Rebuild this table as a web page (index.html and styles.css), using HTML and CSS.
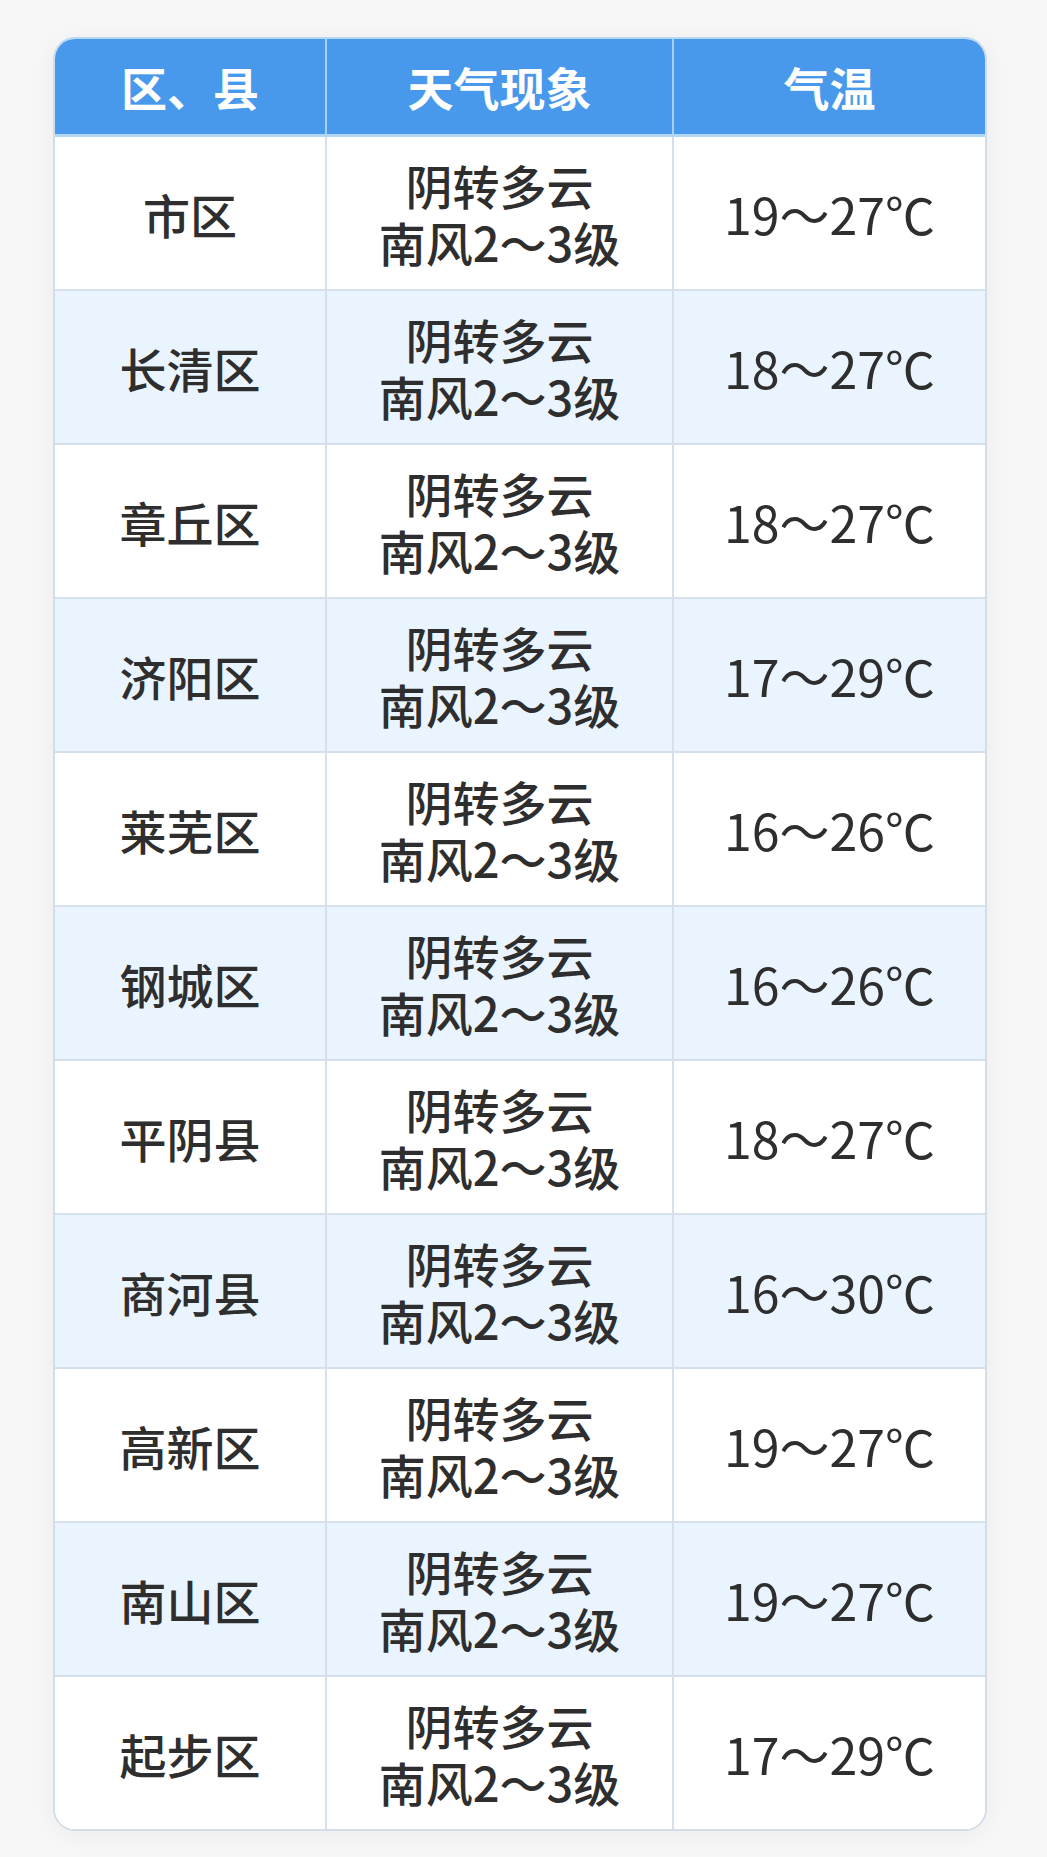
FILE: index.html
```html
<!DOCTYPE html>
<html lang="zh-CN">
<head>
<meta charset="utf-8">
<link rel="stylesheet" href="styles.css">
</head>
<body>
<div class="page">
  <div class="card">
    <div class="row head">
      <div class="cell">区、县</div>
      <div class="cell">天气现象</div>
      <div class="cell">气温</div>
    </div>
    <div class="row">
      <div class="cell">市区</div>
      <div class="cell wx"><span class="ln">阴转多云</span><span class="ln">南风2～3级</span></div>
      <div class="cell temp">19～27℃</div>
    </div>
    <div class="row alt">
      <div class="cell">长清区</div>
      <div class="cell wx"><span class="ln">阴转多云</span><span class="ln">南风2～3级</span></div>
      <div class="cell temp">18～27℃</div>
    </div>
    <div class="row">
      <div class="cell">章丘区</div>
      <div class="cell wx"><span class="ln">阴转多云</span><span class="ln">南风2～3级</span></div>
      <div class="cell temp">18～27℃</div>
    </div>
    <div class="row alt">
      <div class="cell">济阳区</div>
      <div class="cell wx"><span class="ln">阴转多云</span><span class="ln">南风2～3级</span></div>
      <div class="cell temp">17～29℃</div>
    </div>
    <div class="row">
      <div class="cell">莱芜区</div>
      <div class="cell wx"><span class="ln">阴转多云</span><span class="ln">南风2～3级</span></div>
      <div class="cell temp">16～26℃</div>
    </div>
    <div class="row alt">
      <div class="cell">钢城区</div>
      <div class="cell wx"><span class="ln">阴转多云</span><span class="ln">南风2～3级</span></div>
      <div class="cell temp">16～26℃</div>
    </div>
    <div class="row">
      <div class="cell">平阴县</div>
      <div class="cell wx"><span class="ln">阴转多云</span><span class="ln">南风2～3级</span></div>
      <div class="cell temp">18～27℃</div>
    </div>
    <div class="row alt">
      <div class="cell">商河县</div>
      <div class="cell wx"><span class="ln">阴转多云</span><span class="ln">南风2～3级</span></div>
      <div class="cell temp">16～30℃</div>
    </div>
    <div class="row">
      <div class="cell">高新区</div>
      <div class="cell wx"><span class="ln">阴转多云</span><span class="ln">南风2～3级</span></div>
      <div class="cell temp">19～27℃</div>
    </div>
    <div class="row alt">
      <div class="cell">南山区</div>
      <div class="cell wx"><span class="ln">阴转多云</span><span class="ln">南风2～3级</span></div>
      <div class="cell temp">19～27℃</div>
    </div>
    <div class="row last">
      <div class="cell">起步区</div>
      <div class="cell wx"><span class="ln">阴转多云</span><span class="ln">南风2～3级</span></div>
      <div class="cell temp">17～29℃</div>
    </div>
  </div>
</div>
</body>
</html>
```

FILE: styles.css
```css
html, body {
  margin: 0;
  padding: 0;
  background: #f7f7f7;
}

.page {
  padding: 37px 0 30px 53px;
  font-family: "Noto Sans CJK SC", "Noto Sans", sans-serif;
}

.card {
  width: 934px;
  box-sizing: border-box;
  border: 2px solid #d3dde7;
  border-top-color: #b4d8f7;
  border-radius: 22px;
  overflow: hidden;
  background: #ffffff;
  box-shadow: 0 4px 30px rgba(0, 0, 0, 0.05);
}

.row {
  display: grid;
  grid-template-columns: 272px 347px 1fr;
  height: 154px;
  border-bottom: 2px solid #d6e0ea;
  box-sizing: border-box;
  background: #ffffff;
  color: #2e2e2e;
  font-size: 47px;
  font-weight: 500;
  line-height: 57px;
}

.row.alt {
  background: #eaf4fe;
}

.row.last {
  border-bottom: none;
  height: 152px;
}

.row.head {
  height: 98px;
  background: #4899eb;
  color: #ffffff;
  font-size: 46px;
  font-weight: 700;
  border-bottom: 3px solid #b3d7f6;
}

.cell {
  display: flex;
  align-items: center;
  justify-content: center;
  text-align: center;
  border-right: 2px solid #d6e0ea;
}

.cell:last-child {
  border-right: none;
}

.cell.wx {
  flex-direction: column;
}

.ln {
  display: block;
  height: 57px;
  white-space: nowrap;
}

.cell.temp {
  font-size: 50px;
  font-weight: 400;
}

.head .cell {
  border-right-color: #a9d0f4;
}
```
